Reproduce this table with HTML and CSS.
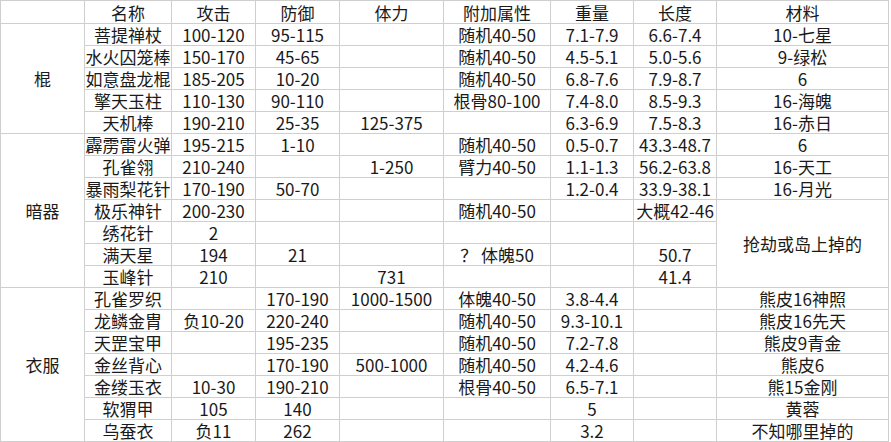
FILE: index.html
```html
<!DOCTYPE html>
<html lang="zh-CN">
<head>
<meta charset="utf-8">
<title>装备表</title>
<link rel="stylesheet" href="styles.css">
</head>
<body>
<table class="sheet">
  <colgroup>
    <col class="c-type"><col class="c-name"><col class="c-atk"><col class="c-def"><col class="c-hp"><col class="c-attr"><col class="c-wt"><col class="c-len"><col class="c-mat">
  </colgroup>
  <tbody>
    <tr class="head"><td></td><td>名称</td><td>攻击</td><td>防御</td><td>体力</td><td>附加属性</td><td>重量</td><td>长度</td><td>材料</td></tr>

    <tr><td rowspan="5">棍</td><td>菩提禅杖</td><td>100-120</td><td>95-115</td><td></td><td>随机40-50</td><td>7.1-7.9</td><td>6.6-7.4</td><td>10-七星</td></tr>
    <tr><td>水火囚笼棒</td><td>150-170</td><td>45-65</td><td></td><td>随机40-50</td><td>4.5-5.1</td><td>5.0-5.6</td><td>9-绿松</td></tr>
    <tr><td>如意盘龙棍</td><td>185-205</td><td>10-20</td><td></td><td>随机40-50</td><td>6.8-7.6</td><td>7.9-8.7</td><td>6</td></tr>
    <tr><td>擎天玉柱</td><td>110-130</td><td>90-110</td><td></td><td>根骨80-100</td><td>7.4-8.0</td><td>8.5-9.3</td><td>16-海魄</td></tr>
    <tr><td>天机棒</td><td>190-210</td><td>25-35</td><td>125-375</td><td></td><td>6.3-6.9</td><td>7.5-8.3</td><td>16-赤日</td></tr>

    <tr><td rowspan="7">暗器</td><td>霹雳雷火弹</td><td>195-215</td><td>1-10</td><td></td><td>随机40-50</td><td>0.5-0.7</td><td>43.3-48.7</td><td>6</td></tr>
    <tr><td>孔雀翎</td><td>210-240</td><td></td><td>1-250</td><td>臂力40-50</td><td>1.1-1.3</td><td>56.2-63.8</td><td>16-天工</td></tr>
    <tr><td>暴雨梨花针</td><td>170-190</td><td>50-70</td><td></td><td></td><td>1.2-0.4</td><td>33.9-38.1</td><td>16-月光</td></tr>
    <tr><td>极乐神针</td><td>200-230</td><td></td><td></td><td>随机40-50</td><td></td><td>大概42-46</td><td rowspan="4">抢劫或岛上掉的</td></tr>
    <tr><td>绣花针</td><td>2</td><td></td><td></td><td></td><td></td><td></td></tr>
    <tr><td>满天星</td><td>194</td><td>21</td><td></td><td>？ 体魄50</td><td></td><td>50.7</td></tr>
    <tr><td>玉峰针</td><td>210</td><td></td><td>731</td><td></td><td></td><td>41.4</td></tr>

    <tr><td rowspan="7">衣服</td><td>孔雀罗织</td><td></td><td>170-190</td><td>1000-1500</td><td>体魄40-50</td><td>3.8-4.4</td><td></td><td>熊皮16神照</td></tr>
    <tr><td>龙鳞金胄</td><td>负10-20</td><td>220-240</td><td></td><td>随机40-50</td><td>9.3-10.1</td><td></td><td>熊皮16先天</td></tr>
    <tr><td>天罡宝甲</td><td></td><td>195-235</td><td></td><td>随机40-50</td><td>7.2-7.8</td><td></td><td>熊皮9青金</td></tr>
    <tr><td>金丝背心</td><td></td><td>170-190</td><td>500-1000</td><td>随机40-50</td><td>4.2-4.6</td><td></td><td>熊皮6</td></tr>
    <tr><td>金缕玉衣</td><td>10-30</td><td>190-210</td><td></td><td>根骨40-50</td><td>6.5-7.1</td><td></td><td>熊15金刚</td></tr>
    <tr><td>软猬甲</td><td>105</td><td>140</td><td></td><td></td><td>5</td><td></td><td>黄蓉</td></tr>
    <tr><td>乌蚕衣</td><td>负11</td><td>262</td><td></td><td></td><td>3.2</td><td></td><td>不知哪里掉的</td></tr>
  </tbody>
</table>
</body>
</html>
```

FILE: styles.css
```css
html, body {
  margin: 0;
  padding: 0;
  background: #ffffff;
}

.sheet {
  border-collapse: separate;
  border-spacing: 0;
  table-layout: fixed;
  width: 889px;
  border-left: 1px solid #cfcfcf;
  border-top: 1px solid #cfcfcf;
  font-family: "Noto Sans CJK SC", "Noto Sans", sans-serif;
  font-size: 17px;
  color: #1a1a1a;
}

.c-type { width: 84px; }
.c-name { width: 87px; }
.c-atk  { width: 84px; }
.c-def  { width: 84px; }
.c-hp   { width: 104px; }
.c-attr { width: 107px; }
.c-wt   { width: 83px; }
.c-len  { width: 83px; }
.c-mat  { width: 172px; }

.sheet td {
  border-right: 1px solid #cfcfcf;
  border-bottom: 1px solid #cfcfcf;
  padding: 1px 0 0 0;
  line-height: 20px;
  text-align: center;
  vertical-align: middle;
  white-space: nowrap;
}

.sheet .head td {
  padding-top: 2px;
}
```
